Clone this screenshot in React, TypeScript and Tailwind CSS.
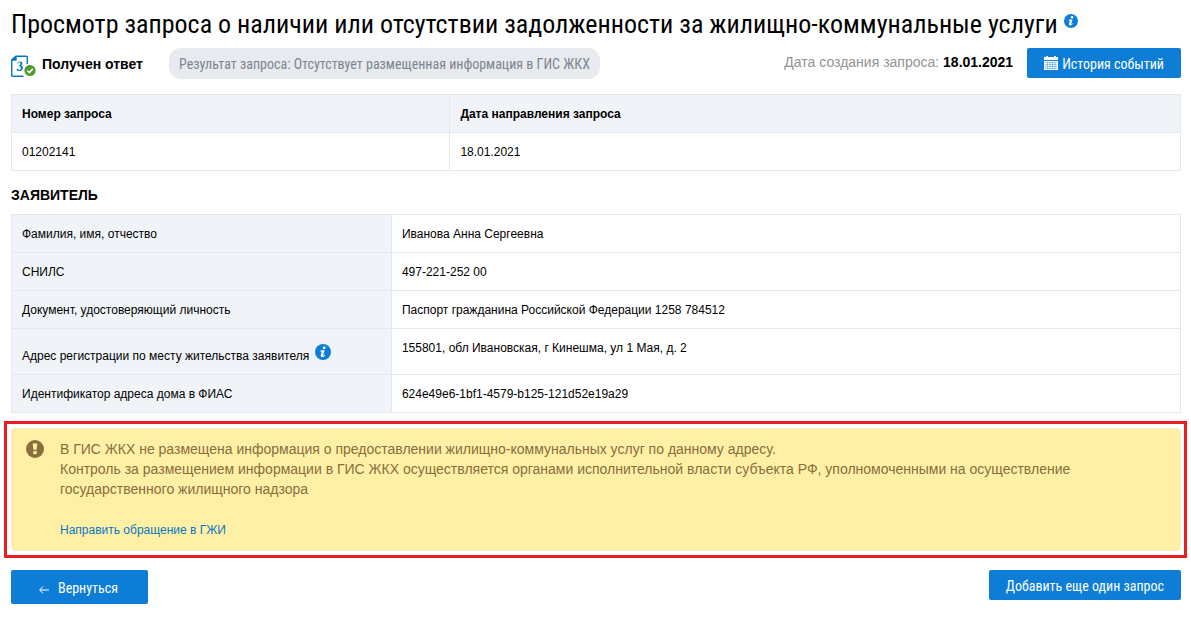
import type { ReactNode } from 'react';

const REQUEST = {
  number: '01202141',
  sentAt: '18.01.2021',
  createdAt: '18.01.2021',
};

type ApplicantRow = {
  label: string;
  value: string;
  hint?: boolean;
};

const APPLICANT: ApplicantRow[] = [
  { label: 'Фамилия, имя, отчество', value: 'Иванова Анна Сергеевна' },
  { label: 'СНИЛС', value: '497-221-252 00' },
  {
    label: 'Документ, удостоверяющий личность',
    value: 'Паспорт гражданина Российской Федерации 1258 784512',
  },
  {
    label: 'Адрес регистрации по месту жительства заявителя',
    value: '155801, обл Ивановская, г Кинешма, ул 1 Мая, д. 2',
    hint: true,
  },
  { label: 'Идентификатор адреса дома в ФИАС', value: '624e49e6-1bf1-4579-b125-121d52e19a29' },
];

function InfoIcon({ className }: { className: string }) {
  return (
    <svg viewBox="0 0 16 16" className={className} aria-hidden="true">
      <circle cx="8" cy="8" r="8" fill="#0d7dd8" />
      <circle cx="9.2" cy="3.8" r="1.4" fill="#fff" />
      <path
        d="M5.7 6.300h4L8.300 11c-.1.500.1.600.5.300l.8-.7.6.6c-1 1.300-2 1.800-3.100 1.800-1.200 0-1.700-.8-1.300-2l.9-3.400H5.300z"
        fill="#fff"
      />
    </svg>
  );
}

// Request document with a green "answered" tick in the corner
function AnsweredIcon() {
  return (
    <svg viewBox="0 0 25 22" className="mt-1 h-[22px] w-[25px] shrink-0" aria-hidden="true">
      <path
        d="M12.500 21.200H1.700a1 1 0 0 1-1-1V5L5 1.200h10.300a1 1 0 0 1 1 1V9"
        fill="none"
        stroke="#0a78c2"
        strokeWidth="1.500"
      />
      <path d="M.5 5.800V4.600L4.800.8h.9v5z" fill="#0a78c2" />
      <path
        d="M6.200 8.600c.3-1.400 1.200-2.100 2.600-2.100 1.600 0 2.600.8 2.600 2 0 1-.6 1.700-1.500 2.100 1.200.3 2 1.200 2 2.400 0 1.900-1.500 3.100-3.800 3.100-1.600 0-2.500-.6-2.500-1.400 0-.5.400-.9.900-.9.900 0 1 1.300 1.900 1.300.8 0 1.400-.7 1.400-1.900 0-1.300-.8-1.900-2.200-1.900v-.8c1.200-.1 1.800-.7 1.800-1.700 0-.8-.4-1.300-1.100-1.300-.8 0-1.200.4-1.500 1.200z"
        fill="#0a78c2"
      />
      <circle cx="19" cy="15.500" r="5.600" fill="#4a9c2d" />
      <path d="m16.300 15.600 2 2 3.500-3.700" fill="none" stroke="#fff" strokeWidth="1.600" />
    </svg>
  );
}

function CalendarIcon() {
  return (
    <svg viewBox="0 0 14 14" className="-mt-0.5 h-3.5 w-3.5" aria-hidden="true">
      <path d="M0 1h2V0h2v1h6V0h2v1h2v3H0z" fill="#fff" />
      <path d="M0 5h14v9H0z" fill="#fff" />
      <path
        d="M1 6.500h12M1 8.500h12M1 10.500h12M1 12.500h12M3.500 6v7M6 6v7M8.500 6v7M11 6v7"
        stroke="#0d7dd8"
        strokeWidth=".4"
      />
    </svg>
  );
}

function WarningIcon() {
  return (
    <svg viewBox="0 0 18 18" className="mt-px h-[18px] w-[18px] shrink-0" aria-hidden="true">
      <circle cx="9" cy="9" r="9" fill="#8a6d3b" />
      <path d="M6.700 3.600h4.600l-.8 6.200h-3z" fill="#fff0a6" />
      <path d="M7.300 11.200h3.400v2.900H7.300z" fill="#fff0a6" />
    </svg>
  );
}

function ArrowLeftIcon() {
  return (
    <svg viewBox="0 0 10 8" className="mt-1 h-2 w-2.5" aria-hidden="true">
      <path d="M10 4H.8M4 .6.7 4 4 7.400" fill="none" stroke="#fff" strokeWidth="1" />
    </svg>
  );
}

function ActionButton({ className, children }: { className: string; children: ReactNode }) {
  return (
    <button
      type="button"
      className={`flex cursor-pointer items-center rounded-xs bg-[#0d7dd8] font-['Roboto_Condensed','Liberation_Sans_Narrow',sans-serif] text-[14px] leading-5 text-white ${className}`}
    >
      {children}
    </button>
  );
}

export default function App() {
  return (
    <main className="bg-white px-1 pt-2 pb-4 font-['Liberation_Sans',Arial,sans-serif] text-[12px] leading-4 text-black">
      <div className="pr-1.5 pl-[7px]">
        <h1 className="flex items-start gap-1.5 font-['Roboto_Condensed','Liberation_Sans_Narrow',sans-serif] text-[26px] leading-8">
          Просмотр запроса о наличии или отсутствии задолженности за жилищно-коммунальные услуги
          <InfoIcon className="mt-1.5 h-3.5 w-3.5 shrink-0" />
        </h1>

        <div className="mt-2 flex items-start justify-between">
          <div className="flex items-center">
            <AnsweredIcon />
            <strong className="ml-1.5 text-[14px] leading-5">Получен ответ</strong>
            <span className="ml-[26px] rounded-xl bg-[#e7eaef] px-2.5 pt-1.5 pb-[5px] font-['Roboto_Condensed','Liberation_Sans_Narrow',sans-serif] text-[14px] leading-5 text-[#7c868f]">
              Результат запроса: Отсутствует размещенная информация в ГИС ЖКХ
            </span>
          </div>
          <div className="flex items-start gap-3.5">
            <p className="pt-1 text-[14px] leading-5 text-[#929292]">
              Дата создания запроса: <strong className="text-black">{REQUEST.createdAt}</strong>
            </p>
            <ActionButton className="gap-1 px-[17px] pt-1.5 pb-1">
              <CalendarIcon />
              История событий
            </ActionButton>
          </div>
        </div>

        <table className="mt-[15px] w-full table-fixed border-collapse border border-[#e3e8ec]">
          <thead>
            <tr className="h-[38px] bg-[#f0f4f8] text-left">
              <th className="w-[37.5%] border border-[#e3e8ec] px-2.5">Номер запроса</th>
              <th className="border border-[#e3e8ec] px-2.5">Дата направления запроса</th>
            </tr>
          </thead>
          <tbody>
            <tr className="h-[38px]">
              <td className="border border-[#e3e8ec] px-2.5">{REQUEST.number}</td>
              <td className="border border-[#e3e8ec] px-2.5">{REQUEST.sentAt}</td>
            </tr>
          </tbody>
        </table>

        <h2 className="mt-3.5 text-[14px] leading-5 font-bold uppercase">Заявитель</h2>

        <table className="mt-[9px] w-full table-fixed border-collapse border border-[#e3e8ec]">
          <tbody>
            {APPLICANT.map((row) => (
              <tr key={row.label} className="h-[38px] align-top">
                <th
                  scope="row"
                  className="w-[32.5%] border border-[#e3e8ec] bg-[#f0f4f8] px-2.5 pt-[11px] pb-2.5 text-left font-normal"
                >
                  {row.hint ? (
                    <span className="flex items-start gap-1.5">
                      <span className="pt-2">{row.label}</span>
                      <InfoIcon className="mt-1 h-4 w-4 shrink-0" />
                    </span>
                  ) : (
                    row.label
                  )}
                </th>
                <td className="border border-[#e3e8ec] px-2.5 pt-[11px] pb-2.5">{row.value}</td>
              </tr>
            ))}
          </tbody>
        </table>
      </div>

      <section className="mt-2 border-3 border-[#ed1c24] py-1 pr-[3px] pl-1">
        <div
          role="alert"
          className="flex gap-4 rounded-sm border border-[#faebcc] bg-[#fff0a6] px-3.5 py-2.5 text-[#8a6d3b]"
        >
          <WarningIcon />
          <div className="text-[14px] leading-5">
            <p>
              В ГИС ЖКХ не размещена информация о предоставлении жилищно-коммунальных услуг по данному
              адресу.
            </p>
            <p className="max-w-[1040px]">
              Контроль за размещением информации в ГИС ЖКХ осуществляется органами исполнительной власти
              субъекта РФ, уполномоченными на осуществление государственного жилищного надзора
            </p>
            <a href="#gzhi" className="mt-[21px] inline-block text-[12px] text-[#0a78c2]">
              Направить обращение в ГЖИ
            </a>
          </div>
        </div>
      </section>

      <div className="mt-3 flex items-start justify-between pr-1.5 pl-[7px]">
        <ActionButton className="gap-[9px] pt-2 pr-[30px] pb-1.5 pl-7">
          <ArrowLeftIcon />
          Вернуться
        </ActionButton>
        <ActionButton className="px-[17px] pt-1.5 pb-1">Добавить еще один запрос</ActionButton>
      </div>
    </main>
  );
}
